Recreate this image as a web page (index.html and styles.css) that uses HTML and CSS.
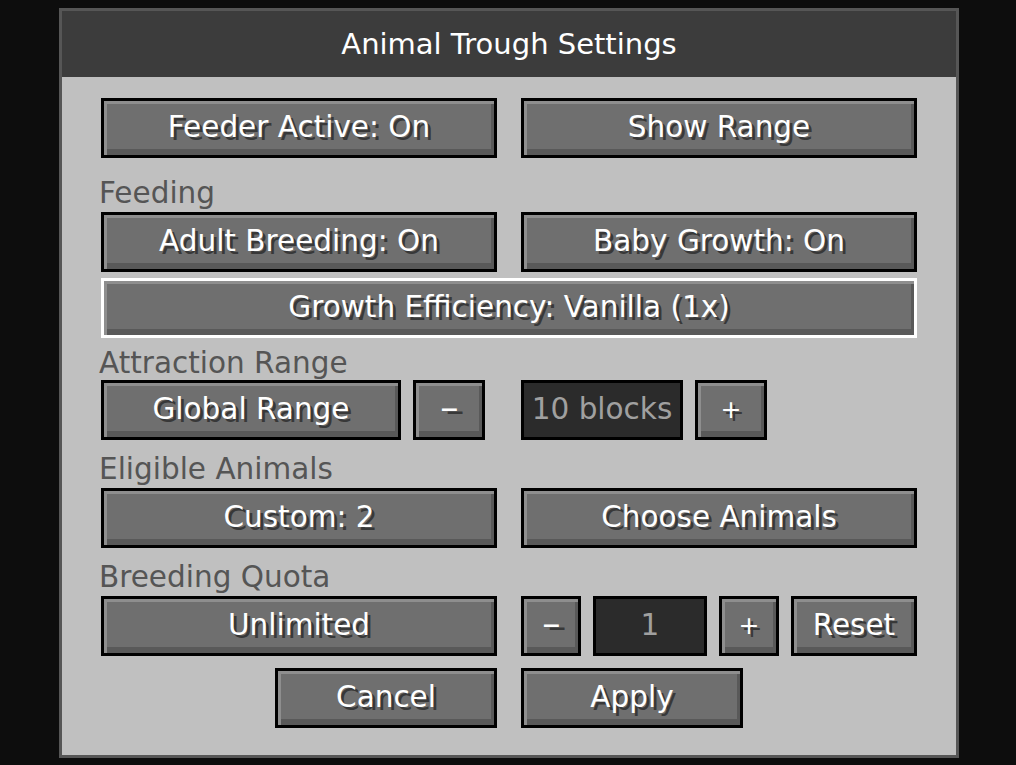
FILE: index.html
```html
<!DOCTYPE html>
<html>
<head>
<meta charset="utf-8">
<link rel="stylesheet" href="styles.css">
</head>
<body>
<div class="panel">
  <div class="titlebar">Animal Trough Settings</div>
  <div class="content">
    <div class="row two">
      <div class="btn">Feeder Active: On</div>
      <div class="btn">Show Range</div>
    </div>
    <div class="label l-feeding">Feeding</div>
    <div class="row two">
      <div class="btn">Adult Breeding: On</div>
      <div class="btn">Baby Growth: On</div>
    </div>
    <div class="row single">
      <div class="btn hover">Growth Efficiency: Vanilla (1x)</div>
    </div>
    <div class="label l-attr">Attraction Range</div>
    <div class="row two">
      <div class="group">
        <div class="btn w300">Global Range</div>
        <div class="btn w72"><span class="dash">-</span></div>
      </div>
      <div class="group">
        <div class="field w162">10 blocks</div>
        <div class="btn w72"><span class="plus">+</span></div>
      </div>
    </div>
    <div class="label l-elig">Eligible Animals</div>
    <div class="row two">
      <div class="btn">Custom: 2</div>
      <div class="btn">Choose Animals</div>
    </div>
    <div class="label l-quota">Breeding Quota</div>
    <div class="row two">
      <div class="btn">Unlimited</div>
      <div class="group">
        <div class="btn w60"><span class="dash">-</span></div>
        <div class="field w114">1</div>
        <div class="btn w60"><span class="plus">+</span></div>
        <div class="btn w126">Reset</div>
      </div>
    </div>
    <div class="row actions">
      <div class="btn w222">Cancel</div>
      <div class="btn w222">Apply</div>
    </div>
  </div>
</div>
</body>
</html>
```

FILE: styles.css
```css
html, body {
  margin: 0;
  padding: 0;
  background: #0d0d0d;
}
body {
  width: 1016px;
  height: 765px;
  overflow: hidden;
  font-family: "DejaVu Sans", "Liberation Sans", sans-serif;
  font-size: 29.5px;
}
.panel {
  box-sizing: border-box;
  width: 900px;
  height: 750px;
  margin: 8px 0 0 59px;
  border: 3px solid #565656;
  background: #c0c0c0;
  display: flex;
  flex-direction: column;
}
.titlebar {
  height: 66px;
  background: #3c3c3c;
  color: #ffffff;
  display: flex;
  align-items: center;
  justify-content: center;
  line-height: 1;
  font-size: 29px;
}
.content {
  padding: 21px 39px 0 39px;
  display: flex;
  flex-direction: column;
}
.row {
  height: 60px;
  display: grid;
  column-gap: 24px;
}
.row.two {
  grid-template-columns: 396px 396px;
}
.row.single {
  grid-template-columns: 816px;
  margin-top: 6px;
}
.row.actions {
  display: flex;
  justify-content: center;
  gap: 24px;
  margin-top: 12px;
}
.group {
  display: flex;
  gap: 12px;
}
.btn {
  box-sizing: border-box;
  height: 60px;
  border: 3px solid #000;
  background: #6f6f6f;
  box-shadow: inset 3px 3px 0 #8e8e8e, inset -3px -6px 0 #595959;
  color: #ffffff;
  text-shadow: 3px 3px 0 #383838;
  display: flex;
  align-items: center;
  justify-content: center;
  line-height: 1;
  white-space: nowrap;
}
.btn.hover {
  border-color: #ffffff;
}
.field {
  box-sizing: border-box;
  height: 60px;
  border: 3px solid #000;
  background: #2b2b2b;
  color: #a0a0a0;
  display: flex;
  align-items: center;
  justify-content: center;
  line-height: 1;
  white-space: nowrap;
}
.w300 { width: 300px; }
.w72 { width: 72px; }
.w162 { width: 162px; }
.w60 { width: 60px; }
.w114 { width: 114px; }
.w126 { width: 126px; }
.w222 { width: 222px; }
.dash {
  display: inline-block;
  transform: scaleX(1.9) translateY(-1px);
}
.plus {
  font-size: 25px;
  display: inline-block;
  transform: translateY(-1px);
}
.label {
  height: 30px;
  line-height: 30px;
  color: #555555;
  margin-left: -2px;
  white-space: nowrap;
}
.l-feeding { margin-top: 20px; margin-bottom: 4px; }
.l-attr { margin-top: 10px; margin-bottom: 2px; }
.l-elig { margin-top: 14px; margin-bottom: 4px; }
.l-quota { margin-top: 14px; margin-bottom: 4px; }
```
